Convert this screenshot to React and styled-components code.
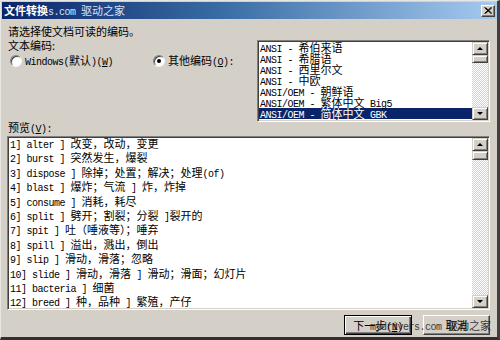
import styled, { createGlobalStyle } from "styled-components";

const GlobalStyle = createGlobalStyle`
  body {
    margin: 0;
    background: #d4d0c8;
  }
`;

const Window = styled.div`
  position: relative;
  box-sizing: border-box;
  width: 500px;
  height: 340px;
  background: #d4d0c8;
  border-top: 1px solid #e8e6e0;
  border-left: 1px solid #e8e6e0;
  border-right: 3px solid #404040;
  border-bottom: 3px solid #303030;
  padding: 1px 0 0 1px;
  display: flex;
  flex-direction: column;
  font-family: "Noto Sans CJK SC", sans-serif;
  font-size: 11px;
  color: #000;
  overflow: hidden;
`;

const TitleBar = styled.div`
  height: 17px;
  display: flex;
  align-items: center;
  padding: 0 2px 0 2px;
  background: linear-gradient(90deg, #0a246a 0%, #3a6ea5 45%, #a6caf0 100%);
  white-space: nowrap;
`;

const TitleText = styled.span`
  color: #fff;
  font-weight: 700;
  font-size: 11px;
  line-height: 17px;
`;

const TitleMark = styled.span`
  color: #d8e2f6;
  font-size: 11px;
  line-height: 17px;
`;

const CloseButton = styled.div`
  margin-left: auto;
  box-sizing: border-box;
  width: 14px;
  height: 12px;
  background: #d4d0c8;
  border: 1px solid;
  border-color: #fff #404040 #404040 #fff;
  box-shadow: inset -1px -1px #808080;
  display: flex;
  align-items: center;
  justify-content: center;
`;

const Body = styled.div`
  flex: 1;
  display: flex;
  flex-direction: column;
  padding: 5px 7px 0 5px;
`;

const TopSection = styled.div`
  display: grid;
  grid-template-columns: 250px 1fr;
`;

const LeftColumn = styled.div`
  display: flex;
  flex-direction: column;
  padding-left: 1px;
`;

const Line = styled.div`
  height: 14px;
  line-height: 14px;
  white-space: nowrap;
  margin-top: ${(p) => p.$gap || 0}px;
`;

const RadioRow = styled.div`
  display: grid;
  grid-template-columns: 143px auto;
  height: 14px;
  margin: 1px 0 0 2px;
`;

const RadioOption = styled.label`
  display: flex;
  align-items: center;
  gap: 3px;
  line-height: 14px;
  white-space: nowrap;
`;

const RadioCircle = styled.span`
  box-sizing: border-box;
  width: 12px;
  height: 12px;
  border-radius: 50%;
  border: 1px solid;
  border-color: #808080 #f4f4f4 #f4f4f4 #808080;
  background: #fff;
  box-shadow: inset 1px 1px #404040;
  display: flex;
  align-items: center;
  justify-content: center;

  &::after {
    content: "";
    width: 4px;
    height: 4px;
    border-radius: 50%;
    background: ${(p) => (p.$checked ? "#000" : "transparent")};
  }
`;

const Sunken = styled.div`
  box-sizing: border-box;
  display: flex;
  background: #fff;
  border: 1px solid;
  border-color: #808080 #fff #fff #808080;
  box-shadow: inset 1px 1px #404040, inset -1px -1px #d4d0c8;
  padding: 1px;
  overflow: hidden;
`;

const ListBox = styled(Sunken)`
  margin-top: 16px;
  height: 82px;
`;

const ListItems = styled.div`
  flex: 1;
  overflow: hidden;
`;

const ListItem = styled.div`
  height: 11px;
  line-height: 11px;
  padding-left: 1px;
  white-space: pre;
  background: ${(p) => (p.$selected ? "#0a246a" : "transparent")};
  color: ${(p) => (p.$selected ? "#fff" : "#000")};
`;

const Preview = styled(Sunken)`
  margin-top: 2px;
  height: 174px;
`;

const PreviewLines = styled.div`
  flex: 1;
  margin-top: -2px;
  padding-left: 1px;
  overflow: hidden;
`;

const PreviewLine = styled.div`
  height: 14.4px;
  line-height: 14.4px;
  white-space: pre;
`;

const ScrollBar = styled.div`
  width: 16px;
  display: flex;
  flex-direction: column;
  background: repeating-conic-gradient(#d4d0c8 0 25%, #fff 0 50%) 0 0 / 2px 2px;
`;

const ScrollButton = styled.div`
  box-sizing: border-box;
  height: ${(p) => p.$h || 13}px;
  background: #d4d0c8;
  border: 1px solid;
  border-color: #d4d0c8 #404040 #404040 #d4d0c8;
  box-shadow: inset 1px 1px #fff, inset -1px -1px #808080;
  display: flex;
  align-items: center;
  justify-content: center;
  margin-top: ${(p) => (p.$bottom ? "auto" : "0")};
`;

const Arrow = styled.span`
  width: 0;
  height: 0;
  border-left: 3px solid transparent;
  border-right: 3px solid transparent;
  ${(p) =>
    p.$down
      ? "border-top: 3px solid #000;"
      : "border-bottom: 3px solid #000;"}
`;

const ButtonRow = styled.div`
  display: flex;
  justify-content: flex-end;
  gap: 11px;
  margin-top: 5px;
`;

const Button = styled.button`
  box-sizing: border-box;
  width: ${(p) => p.$w}px;
  height: 20px;
  padding: 0;
  background: #d4d0c8;
  font-family: "Noto Sans CJK SC", sans-serif;
  font-size: 11px;
  color: #000;
  border: 1px solid;
  border-color: ${(p) => (p.$default ? "#000" : "#fff #404040 #404040 #fff")};
  box-shadow: ${(p) =>
    p.$default
      ? "inset 1px 1px #fff, inset -1px -1px #404040, inset -2px -2px #808080"
      : "inset -1px -1px #808080"};
`;

const Latin = styled.span`
  font-family: "Liberation Mono", monospace;
  font-size: 10px;
  line-height: 1;
  letter-spacing: -0.5px;
`;

const Watermark = styled.div`
  position: absolute;
  right: 6px;
  bottom: 4px;
  color: #1c1c1c;
  opacity: 0.85;
  font-size: 11px;
  line-height: 14px;
  white-space: nowrap;
`;

const Mixed = ({ text }) =>
  text
    .split(/([\x00-\x7f]+)/)
    .filter(Boolean)
    .map((part, i) =>
      /^[\x00-\x7f]+$/.test(part) ? (
        <Latin key={i}>{part}</Latin>
      ) : (
        <span key={i}>{part}</span>
      )
    );

const encodings = [
  "ANSI - 希伯来语",
  "ANSI - 希腊语",
  "ANSI - 西里尔文",
  "ANSI - 中欧",
  "ANSI/OEM - 朝鲜语",
  "ANSI/OEM - 繁体中文 Big5",
  "ANSI/OEM - 简体中文 GBK",
  "ANSI/OEM - 日文 Shift-JIS",
];

const words = [
  "1] alter ] 改变，改动，变更",
  "2] burst ] 突然发生，爆裂",
  "3] dispose ] 除掉；处置；解决；处理(of)",
  "4] blast ] 爆炸；气流 ] 炸，炸掉",
  "5] consume ] 消耗，耗尽",
  "6] split ] 劈开；割裂；分裂 ]裂开的",
  "7] spit ] 吐（唾液等）；唾弃",
  "8] spill ] 溢出，溅出，倒出",
  "9] slip ] 滑动，滑落；忽略",
  "10] slide ] 滑动，滑落 ] 滑动；滑面；幻灯片",
  "11] bacteria ] 细菌",
  "12] breed ] 种，品种 ] 繁殖，产仔",
];

const App = () => {
  return (
    <>
      <GlobalStyle />
      <Window>
        <TitleBar>
          <TitleText>文件转换</TitleText>
          <TitleMark>
            <Latin>s.com </Latin> 驱动之家
          </TitleMark>
          <CloseButton>
            <svg width="8" height="7" viewBox="0 0 8 7">
              <path d="M0.5 0.5 L7 6.5 M1.5 0.5 L8 6.5 M7 0.5 L0.5 6.5 M8 0.5 L1.5 6.5" stroke="#000" strokeWidth="1" />
            </svg>
          </CloseButton>
        </TitleBar>
        <Body>
          <TopSection>
            <LeftColumn>
              <Line>请选择使文档可读的编码。</Line>
              <Line>文本编码:</Line>
              <RadioRow>
                <RadioOption>
                  <RadioCircle />
                  <span>
                    <Latin>Windows(</Latin>默认<Latin>)(<u>W</u>)</Latin>
                  </span>
                </RadioOption>
                <RadioOption>
                  <RadioCircle $checked />
                  <span>
                    其他编码<Latin>(<u>O</u>):</Latin>
                  </span>
                </RadioOption>
              </RadioRow>
              <Line $gap={53}>
                预览<Latin>(<u>V</u>):</Latin>
              </Line>
            </LeftColumn>
            <ListBox>
              <ListItems>
                {encodings.map((e, i) => (
                  <ListItem key={e} $selected={i === 6}>
                    <Mixed text={e} />
                  </ListItem>
                ))}
              </ListItems>
              <ScrollBar>
                <ScrollButton>
                  <Arrow />
                </ScrollButton>
                <ScrollButton $h={8} />
                <ScrollButton $bottom>
                  <Arrow $down />
                </ScrollButton>
              </ScrollBar>
            </ListBox>
          </TopSection>
          <Preview>
            <PreviewLines>
              {words.map((w) => (
                <PreviewLine key={w}>
                  <Mixed text={w} />
                </PreviewLine>
              ))}
            </PreviewLines>
            <ScrollBar>
              <ScrollButton>
                <Arrow />
              </ScrollButton>
              <ScrollButton $h={9} />
              <ScrollButton $bottom>
                <Arrow $down />
              </ScrollButton>
            </ScrollBar>
          </Preview>
          <ButtonRow>
            <Button $w={68} $default>
              下一步<Latin>(<u>N</u>)</Latin>
            </Button>
            <Button $w={67}>取消</Button>
          </ButtonRow>
        </Body>
        <Watermark>
          <Latin>mydrivers.com </Latin>驱动之家
        </Watermark>
      </Window>
    </>
  );
};

export default App;
